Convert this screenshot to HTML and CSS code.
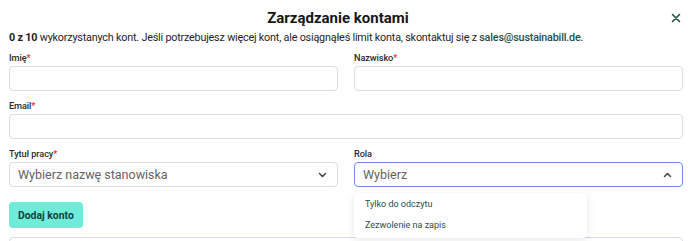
FILE: index.html
```html
<!DOCTYPE html>
<html lang="pl">
<head>
<meta charset="utf-8">
<link rel="stylesheet" href="styles.css">
</head>
<body>
<div class="modal">
  <div class="header">
    <span></span>
    <h1 class="title">Zarządzanie kontami</h1>
    <button class="close" aria-label="Zamknij">
      <svg width="10" height="10" viewBox="0 0 10 10"><path d="M1.5 1.5L8.5 8.5M8.5 1.5L1.5 8.5" stroke="#1f4f4a" stroke-width="1.6" stroke-linecap="round"/></svg>
    </button>
  </div>
  <p class="info"><b>0 z 10</b> wykorzystanych kont. Jeśli potrzebujesz więcej kont, ale osiągnąłeś limit konta, skontaktuj się z <a class="mail" href="#">sales@sustainabill.de</a>.</p>
  <div class="form">
    <div class="field">
      <label class="label">Imię<span class="req">*</span></label>
      <div class="input"></div>
    </div>
    <div class="field">
      <label class="label">Nazwisko<span class="req">*</span></label>
      <div class="input"></div>
    </div>
    <div class="field wide">
      <label class="label">Email<span class="req">*</span></label>
      <div class="input"></div>
    </div>
    <div class="field">
      <label class="label">Tytuł pracy<span class="req">*</span></label>
      <div class="input select">
        <span class="placeholder">Wybierz nazwę stanowiska</span>
        <svg width="9" height="6" viewBox="0 0 9 6"><path d="M1.5 1.5L4.5 4.5L7.5 1.5" fill="none" stroke="#444" stroke-width="1.5" stroke-linecap="round" stroke-linejoin="round"/></svg>
      </div>
    </div>
    <div class="field drop-host">
      <label class="label">Rola</label>
      <div class="input select focused">
        <span class="placeholder">Wybierz</span>
        <svg width="9" height="6" viewBox="0 0 9 6"><path d="M1.5 4.5L4.5 1.5L7.5 4.5" fill="none" stroke="#444" stroke-width="1.5" stroke-linecap="round" stroke-linejoin="round"/></svg>
      </div>
      <ul class="menu">
        <li>Tylko do odczytu</li>
        <li>Zezwolenie na zapis</li>
      </ul>
    </div>
  </div>
  <button class="add">Dodaj konto</button>
  <div class="list"></div>
</div>
</body>
</html>
```
FILE: styles.css
```css
* { box-sizing: border-box; }
body {
  margin: 0;
  background: #fff;
  font-family: Roboto, "Noto Sans", sans-serif;
  color: #1b1b1b;
  overflow: hidden;
  height: 241px;
}
.modal {
  padding: 0 5px 0 9px;
}
.header {
  display: grid;
  grid-template-columns: 1fr auto 1fr;
  align-items: center;
  height: 30px;
  padding-top: 5px;
}
.title {
  margin: 0;
  font-size: 15px;
  font-weight: 700;
  color: #161616;
  padding-right: 16px;
}
.close {
  justify-self: end;
  border: 0;
  background: none;
  padding: 0;
  margin-right: 2px;
  display: flex;
}
.info {
  margin: 0;
  font-size: 10.8px;
  letter-spacing: -0.2px;
  line-height: 16px;
  white-space: nowrap;
  color: #1e1e1e;
}
.info b { font-weight: 700; }
.mail {
  color: #1f4f4a;
  text-decoration: none;
  font-weight: 500;
}
.form {
  display: grid;
  grid-template-columns: 1fr 1fr;
  column-gap: 16px;
  row-gap: 9px;
  margin-top: 6px;
}
.field {
  display: flex;
  flex-direction: column;
  gap: 3px;
}
.wide { grid-column: 1 / -1; }
.label {
  font-size: 9.2px;
  letter-spacing: -0.1px;
  line-height: 11px;
  font-weight: 500;
  color: #2b2b2b;
}
.req { color: #e0303a; }
.input {
  height: 25px;
  border: 1px solid #dcdcdc;
  border-radius: 4px;
  background: #fff;
}
.select {
  display: flex;
  align-items: center;
  justify-content: space-between;
  padding: 0 10px 0 8px;
}
.placeholder {
  font-size: 12.5px;
  color: #626262;
}
.focused {
  border: 1.5px solid #6c8cf5;
}
.drop-host { position: relative; }
.menu {
  position: absolute;
  left: 0;
  top: 45px;
  width: 233px;
  margin: 0;
  padding: 1px 0 2px;
  list-style: none;
  background: #fff;
  border-radius: 4px;
  box-shadow: 0 2px 8px rgba(0,0,0,0.10);
  z-index: 2;
}
.menu li {
  font-size: 9px;
  line-height: 21px;
  padding: 0 11px;
  color: #2c4c49;
}
.add {
  display: block;
  margin-top: 15px;
  height: 26px;
  padding: 0 9px;
  border: 0;
  border-radius: 4px;
  background: #6eecd9;
  color: #17403b;
  font-family: inherit;
  font-size: 10.4px;
  font-weight: 700;
}
.list {
  margin-top: 9px;
  height: 40px;
  border: 1px solid #dcd6f0;
  border-radius: 4px;
}
```
